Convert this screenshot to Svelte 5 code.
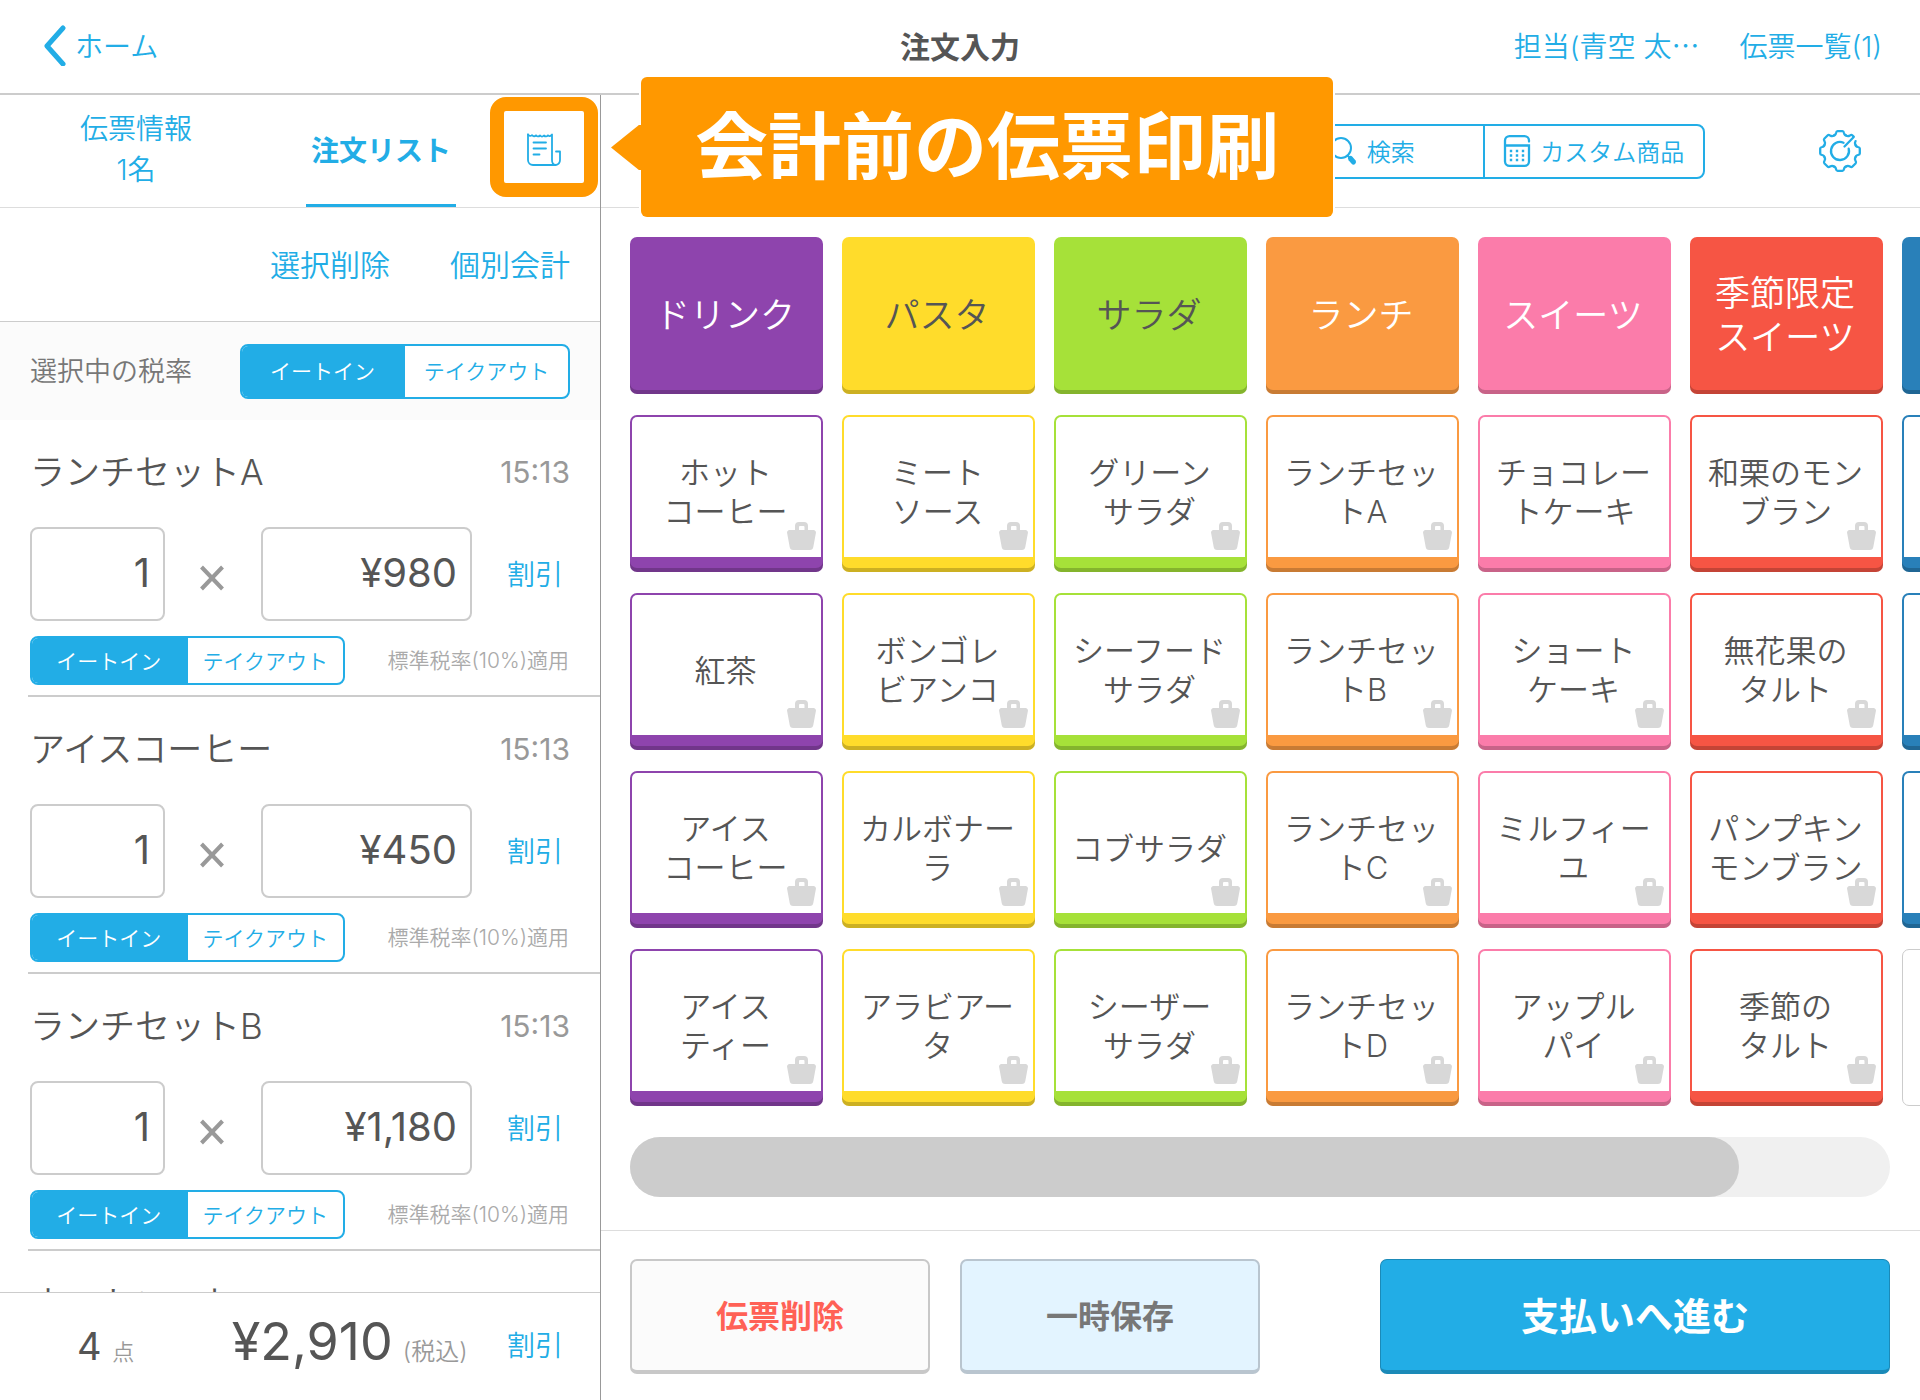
<script lang="ts">
  interface OrderItem {
    id: number;
    name: string;
    time: string;
    qty: string;
    price: string;
    tax: string;
  }

  interface Product {
    name: string;
    bag?: boolean;
    empty?: boolean;
  }

  interface Category {
    name: string;
    color: string;
    products: Product[];
  }

  const taxNote = '標準税率(10%)適用';

  let taxMode = $state('in');

  let items: OrderItem[] = $state([
    { id: 1, name: 'ランチセットA', time: '15:13', qty: '1', price: '¥980', tax: 'in' },
    { id: 2, name: 'アイスコーヒー', time: '15:13', qty: '1', price: '¥450', tax: 'in' },
    { id: 3, name: 'ランチセットB', time: '15:13', qty: '1', price: '¥1,180', tax: 'in' },
    { id: 4, name: 'ホットコーヒー', time: '15:13', qty: '1', price: '¥300', tax: 'in' },
  ]);

  const categories: Category[] = [
    {
      name: 'ドリンク',
      color: 'purple',
      products: [
        { name: 'ホット\nコーヒー', bag: true },
        { name: '紅茶', bag: true },
        { name: 'アイス\nコーヒー', bag: true },
        { name: 'アイス\nティー', bag: true },
      ],
    },
    {
      name: 'パスタ',
      color: 'yellow',
      products: [
        { name: 'ミート\nソース', bag: true },
        { name: 'ボンゴレ\nビアンコ', bag: true },
        { name: 'カルボナー\nラ', bag: true },
        { name: 'アラビアー\nタ', bag: true },
      ],
    },
    {
      name: 'サラダ',
      color: 'green',
      products: [
        { name: 'グリーン\nサラダ', bag: true },
        { name: 'シーフード\nサラダ', bag: true },
        { name: 'コブサラダ', bag: true },
        { name: 'シーザー\nサラダ', bag: true },
      ],
    },
    {
      name: 'ランチ',
      color: 'orange',
      products: [
        { name: 'ランチセッ\nトA', bag: true },
        { name: 'ランチセッ\nトB', bag: true },
        { name: 'ランチセッ\nトC', bag: true },
        { name: 'ランチセッ\nトD', bag: true },
      ],
    },
    {
      name: 'スイーツ',
      color: 'pink',
      products: [
        { name: 'チョコレー\nトケーキ' },
        { name: 'ショート\nケーキ', bag: true },
        { name: 'ミルフィー\nユ', bag: true },
        { name: 'アップル\nパイ', bag: true },
      ],
    },
    {
      name: '季節限定\nスイーツ',
      color: 'red',
      products: [
        { name: '和栗のモン\nブラン', bag: true },
        { name: '無花果の\nタルト', bag: true },
        { name: 'パンプキン\nモンブラン', bag: true },
        { name: '季節の\nタルト', bag: true },
      ],
    },
    {
      name: '',
      color: 'blue',
      products: [
        { name: '' },
        { name: '' },
        { name: 'イタリアン\nプリン' },
        { name: '', empty: true },
      ],
    },
  ];

  const gearTeeth = [0, 90, 135, 180, 225, 270, 315];
</script>

<div class="app">
  <header class="header">
    <a class="back" href="#home">
      <svg width="24" height="42" viewBox="0 0 24 42" fill="none" stroke="currentColor" stroke-width="5" stroke-linecap="round" stroke-linejoin="round">
        <polyline points="20 4 4 22 20 40" />
      </svg>
      <span>ホーム</span>
    </a>
    <h1 class="title">注文入力</h1>
    <nav class="header-links">
      <a href="#staff">担当(青空 太<span class="ellipsis">…</span></a>
      <a href="#slips">伝票一覧(1)</a>
    </nav>
  </header>

  <div class="body">
    <aside class="sidebar">
      <div class="tabs">
        <button class="tab">伝票情報<br />1名</button>
        <button class="tab active">注文リスト</button>
        <div class="print">
          <button class="print-btn" aria-label="会計前の伝票印刷">
            <svg width="36" height="36" viewBox="0 0 36 36" fill="none" stroke="currentColor" stroke-width="1.800" stroke-linecap="round" stroke-linejoin="round">
              <path d="M2 2.500v25.500a5 5 0 0 0 5 5h22.500" />
              <path d="M2 2.500q2 2.600 4 .6q2 2.200 4 .2q2 2.200 4 .2q2 2.200 4 0q2 2 4-.2q2 1.800 4-.8v25.500q0 4.600 3.500 5q4.500-.6 4.500-5v-8.500h-4" />
              <path d="M7.500 10.500h12.500M7.500 16.500h12.500M7.500 22.500h6" />
            </svg>
          </button>
          <div class="callout">会計前の伝票印刷</div>
        </div>
      </div>

      <div class="actions">
        <button class="link">選択削除</button>
        <button class="link">個別会計</button>
      </div>

      <div class="tax-bar">
        <span class="tax-label">選択中の税率</span>
        <div class="segment large">
          <label class:on={taxMode === 'in'}>
            <input type="radio" name="tax" value="in" bind:group={taxMode} />イートイン
          </label>
          <label class:on={taxMode === 'out'}>
            <input type="radio" name="tax" value="out" bind:group={taxMode} />テイクアウト
          </label>
        </div>
      </div>

      <ul class="items">
        {#each items as item (item.id)}
          <li class="item">
            <div class="item-head">
              <span class="item-name">{item.name}</span>
              <span class="item-time">{item.time}</span>
            </div>
            <div class="item-row">
              <input class="box qty" type="text" aria-label="数量" bind:value={item.qty} />
              <svg class="times" width="24" height="26" viewBox="0 0 24 26" stroke="currentColor" stroke-width="4">
                <path d="M1.500 2l21 22M22.500 2l-21 22" />
              </svg>
              <input class="box price" type="text" aria-label="単価" bind:value={item.price} />
              <button class="link discount">割引</button>
            </div>
            <div class="item-tax">
              <div class="segment">
                <label class:on={item.tax === 'in'}>
                  <input type="radio" name="tax-{item.id}" value="in" bind:group={item.tax} />イートイン
                </label>
                <label class:on={item.tax === 'out'}>
                  <input type="radio" name="tax-{item.id}" value="out" bind:group={item.tax} />テイクアウト
                </label>
              </div>
              <span class="tax-note">{taxNote}</span>
            </div>
          </li>
        {/each}
      </ul>

      <div class="total">
        <span class="count">4 <small>点</small></span>
        <span class="sum">¥2,910<small>(税込)</small></span>
        <button class="link discount">割引</button>
      </div>
    </aside>

    <main class="main">
      <div class="toolbar">
        <div class="tools">
          <button class="tool">
            <svg width="28" height="30" viewBox="0 0 28 30" fill="none" stroke="currentColor" stroke-linecap="round">
              <circle cx="11" cy="12" r="10" stroke-width="2" />
              <path d="M17.500 19.500l2.500 2.500" stroke-width="2" />
              <path d="M20.500 22.500l3 3.500" stroke-width="5" />
            </svg>
            <span>検索</span>
          </button>
          <button class="tool">
            <svg width="28" height="32" viewBox="0 0 28 32" fill="none" stroke="currentColor" stroke-width="2.300" stroke-linecap="round">
              <path d="M26 6.500v-1a4.500 4.500 0 0 0-4.500-4.300h-15a4.500 4.500 0 0 0-4.500 4.300v21a4.500 4.500 0 0 0 4.500 4.300h15a4.500 4.500 0 0 0 4.500-4.300v-16h-24" />
              <path d="M8 16h.01M14 16h.01M20 16h.01M8 20.500h.01M14 20.500h.01M20 20.500h.01M8 25h.01M14 25h.01M20 25h.01" stroke-width="2.400" stroke-linecap="square" />
            </svg>
            <span>カスタム商品</span>
          </button>
        </div>
        <button class="settings" aria-label="設定">
          <svg width="44" height="44" viewBox="-22 -22 44 44" fill="none" stroke="currentColor" stroke-width="2.300" stroke-linecap="round" stroke-linejoin="round">
            {#each gearTeeth as angle}
              <path transform="rotate({angle})" d="M-6.400-15.400Q-4.600-15.600-4-18Q-3.600-19.800-2.500-19.800H2.500Q3.600-19.800 4-18Q4.600-15.600 6.400-15.400" />
            {/each}
            <path transform="rotate(45)" d="M-6.400-15.400Q-4.600-15.600-4-18Q-3.600-19.800-2.500-19.800H-.5M4-18Q4.600-15.600 6.400-15.400" />
            <path d="M13.500-13.800L4.500-4.500M3.500-8.300A9 9 0 1 0 8.700-2.300" />
          </svg>
        </button>
      </div>

      <div class="catalog">
        <div class="columns">
          {#each categories as category}
            <div class="column {category.color}">
              <button class="tile category">{category.name}</button>
              {#each category.products as product}
                <button class="tile product" class:empty={product.empty}>
                  <span class="face">{product.name}</span>
                  {#if product.bag}
                    <svg class="bag" width="29" height="28" viewBox="0 0 29 28" fill="currentColor">
                      <path d="M8 8V4a4 4 0 0 1 4-4h5a4 4 0 0 1 4 4v4h5.500a2.500 2.500 0 0 1 2.400 3l-2.600 14a3.500 3.500 0 0 1-3.500 3H6.200a3.500 3.500 0 0 1-3.500-3L.1 11A2.500 2.500 0 0 1 2.500 8zM12 8h5.500V5a1 1 0 0 0-1-1h-3.500a1 1 0 0 0-1 1z" fill-rule="evenodd" />
                    </svg>
                  {/if}
                </button>
              {/each}
            </div>
          {/each}
        </div>
        <div class="scrollbar"><div class="thumb"></div></div>
      </div>

      <footer class="footer">
        <button class="btn delete">伝票削除</button>
        <button class="btn save">一時保存</button>
        <button class="btn pay">支払いへ進む</button>
      </footer>
    </main>
  </div>
</div>

<style>
  :global(body) {
    margin: 0;
    background: #ffffff;
  }

  .app {
    --blue: #22ade6;
    display: flex;
    flex-direction: column;
    height: 100vh;
    overflow: hidden;
    color: #555555;
    font-family: Inter, 'Noto Sans CJK JP', sans-serif;
    font-weight: 350;
  }

  .app * {
    box-sizing: border-box;
  }

  button,
  input {
    margin: 0;
    padding: 0;
    border: 0;
    background: none;
    color: inherit;
    font: inherit;
  }

  button,
  label {
    cursor: pointer;
  }

  a {
    color: var(--blue);
    text-decoration: none;
  }

  svg {
    flex-shrink: 0;
  }

  /* header */
  .header {
    display: grid;
    grid-template-columns: 1fr auto 1fr;
    align-items: center;
    flex-shrink: 0;
    height: 95px;
    padding: 0 38px 4px;
    border-bottom: 2px solid #cccccc;
    font-size: 28px;
  }

  .back {
    display: flex;
    align-items: center;
    gap: 8px;
    padding-left: 5px;
  }

  .title {
    margin: 0;
    font-size: 30px;
    font-weight: 600;
  }

  .header-links {
    display: flex;
    justify-content: flex-end;
    gap: 40px;
  }

  .ellipsis {
    font-family: 'Noto Sans CJK JP', sans-serif;
  }

  .body {
    display: flex;
    flex: 1;
    min-height: 0;
  }

  /* order list */
  .sidebar {
    display: flex;
    flex-direction: column;
    flex: 0 0 601px;
    border-right: 1px solid #999999;
  }

  .tabs {
    display: grid;
    grid-template-columns: 1fr 150px 108px;
    gap: 34px;
    flex-shrink: 0;
    height: 113px;
    padding-right: 2px;
    border-bottom: 1px solid #dddddd;
  }

  .tab {
    color: var(--blue);
    font-size: 28px;
    line-height: 41px;
    padding-bottom: 3px;
  }

  .tab.active {
    padding: 3px 0 0;
    border-bottom: 3px solid var(--blue);
    font-weight: 600;
  }

  .print {
    position: relative;
    height: 100px;
    margin-top: 2px;
  }

  .print-btn {
    display: flex;
    align-items: center;
    justify-content: center;
    width: 108px;
    height: 100px;
    padding-top: 6px;
    border: 14px solid #ff9800;
    border-radius: 16px;
    color: var(--blue);
  }

  .callout {
    position: absolute;
    z-index: 2;
    top: -20px;
    left: calc(100% + 43px);
    width: 692px;
    height: 140px;
    border-radius: 6px;
    background: #ff9800;
    box-shadow: 0 0 0 2px #ffffff;
    color: #ffffff;
    font-size: 73px;
    font-weight: 700;
    line-height: 140px;
    text-align: center;
    white-space: nowrap;
  }

  .callout::before {
    content: '';
    position: absolute;
    top: 48px;
    left: -30px;
    width: 31px;
    height: 45px;
    background: #ff9800;
    clip-path: polygon(0 50%, 90% 0, 100% 0, 100% 100%, 90% 100%);
  }

  .link {
    color: var(--blue);
    font-size: 30px;
  }

  .link.discount {
    font-size: 28px;
  }

  .actions {
    display: flex;
    align-items: center;
    justify-content: flex-end;
    gap: 60px;
    flex-shrink: 0;
    height: 114px;
    padding: 0 30px 4px 0;
    border-bottom: 1px solid #cccccc;
  }

  .tax-bar {
    display: flex;
    align-items: center;
    justify-content: space-between;
    flex-shrink: 0;
    height: 98px;
    padding: 0 30px;
    background: #fbfbfb;
  }

  .tax-label {
    padding-bottom: 3px;
    color: #777777;
    font-size: 27px;
  }

  .segment {
    position: relative;
    display: grid;
    grid-template-columns: 1fr 1fr;
    width: 315px;
    height: 49px;
    overflow: hidden;
    border: 2px solid var(--blue);
    border-radius: 8px;
    background: #ffffff;
    color: var(--blue);
    font-size: 21px;
  }

  .segment.large {
    width: 330px;
    height: 55px;
  }

  .segment label {
    display: flex;
    align-items: center;
    justify-content: center;
    padding-bottom: 2px;
  }

  .segment label.on {
    padding-right: 2px;
    background: var(--blue);
    color: #ffffff;
  }

  .segment input {
    position: absolute;
    opacity: 0;
    pointer-events: none;
  }

  .items {
    flex: 1;
    min-height: 0;
    margin: 0;
    padding: 0 0 0 28px;
    overflow: hidden;
    list-style: none;
  }

  .item {
    padding: 28px 0 10px 2px;
    border-bottom: 2px solid #cccccc;
  }

  .item-head {
    display: flex;
    justify-content: space-between;
    margin-bottom: 31px;
    padding-right: 30px;
    line-height: 48px;
  }

  .item-name {
    font-size: 35px;
  }

  .item-time {
    color: #999999;
    font-size: 30px;
    font-weight: 400;
  }

  .item-row {
    display: flex;
    align-items: center;
    margin-bottom: 15px;
    padding-right: 37px;
  }

  .box {
    height: 94px;
    padding: 0 13px 3px;
    border: 2px solid #cccccc;
    border-radius: 8px;
    font-size: 40px;
    font-weight: 400;
    text-align: right;
  }

  .qty {
    width: 135px;
  }

  .price {
    width: 211px;
  }

  .times {
    margin: 8px 37px 0 35px;
    color: #999999;
  }

  .item-row .discount {
    margin-left: auto;
    padding-bottom: 2px;
  }

  .item-tax {
    display: flex;
    align-items: center;
    justify-content: space-between;
    padding-right: 31px;
  }

  .tax-note {
    padding-bottom: 3px;
    color: #aaaaaa;
    font-size: 21px;
  }

  .total {
    display: flex;
    align-items: baseline;
    justify-content: space-between;
    flex-shrink: 0;
    height: 108px;
    padding: 17px 37px 0 77px;
    border-top: 1px solid #cccccc;
    line-height: 64px;
  }

  .total small {
    color: #999999;
    font-size: 24px;
    font-weight: 350;
  }

  .total .discount {
    align-self: flex-start;
    line-height: 72px;
  }

  .count {
    font-size: 38px;
    font-weight: 400;
  }

  .total .count small {
    font-size: 22px;
  }

  .sum {
    margin-left: 58px;
    font-size: 52px;
    font-weight: 400;
  }

  .sum small {
    margin-left: 10px;
  }

  /* catalog */
  .main {
    display: flex;
    flex-direction: column;
    flex: 1;
    min-width: 0;
  }

  .toolbar {
    display: flex;
    align-items: center;
    justify-content: flex-end;
    gap: 113px;
    flex-shrink: 0;
    height: 113px;
    padding-right: 58px;
    border-bottom: 1px solid #dddddd;
    color: var(--blue);
  }

  .tools {
    display: grid;
    grid-template-columns: 1fr 1fr;
    width: 445px;
    height: 55px;
    border: 2px solid var(--blue);
    border-radius: 8px;
    font-size: 24px;
  }

  .tool {
    display: flex;
    align-items: center;
    justify-content: center;
    gap: 9px;
  }

  .tool span {
    padding-bottom: 2px;
  }

  .tool + .tool {
    border-left: 2px solid var(--blue);
  }

  .settings {
    display: flex;
  }

  .catalog {
    flex: 1;
    min-height: 0;
    padding: 29px 0 0 29px;
  }

  .columns {
    display: flex;
    gap: 19px;
    margin-bottom: 31px;
    overflow: hidden;
  }

  .column {
    display: grid;
    gap: 21px;
    flex: 0 0 193px;
  }

  .purple {
    --color: #8e44ad;
  }

  .yellow {
    --color: #ffdc2b;
  }

  .green {
    --color: #a6e139;
  }

  .orange {
    --color: #fa9a41;
  }

  .pink {
    --color: #fb7caa;
  }

  .red {
    --color: #f65544;
  }

  .blue {
    --color: #2980b9;
  }

  .tile {
    position: relative;
    height: 157px;
    border-radius: 7px;
    background: var(--color);
    box-shadow: inset 0 -4px 0 rgba(0, 0, 0, 0.2);
    white-space: pre-line;
  }

  .category {
    padding: 0 3px 1px 0;
    color: #ffffff;
    font-size: 35px;
    line-height: 44px;
  }

  .yellow .category,
  .green .category {
    color: #555555;
  }

  .product {
    padding: 2px 2px 15px;
    font-size: 31px;
    line-height: 39px;
  }

  .face {
    display: flex;
    align-items: center;
    justify-content: center;
    height: 100%;
    padding: 10px 2px 0 0;
    border-radius: 5px 5px 0 0;
    background: #ffffff;
    text-align: center;
  }

  .product.empty {
    border: 1px solid #cccccc;
    background: #ffffff;
    box-shadow: none;
  }

  .bag {
    position: absolute;
    right: 7px;
    bottom: 22px;
    color: #d8d8d8;
  }

  .scrollbar {
    height: 60px;
    margin-right: 30px;
    border-radius: 30px;
    background: #f0f0f0;
  }

  .thumb {
    width: 88%;
    height: 100%;
    border-radius: 30px;
    background: #cccccc;
  }

  .footer {
    display: flex;
    gap: 30px;
    flex-shrink: 0;
    padding: 28px 30px 26px 29px;
    border-top: 1px solid #dddddd;
  }

  .btn {
    width: 300px;
    height: 115px;
    padding-bottom: 3px;
    border: 2px solid #c8c8c8;
    border-bottom-width: 4px;
    border-radius: 7px;
    font-size: 32px;
    font-weight: 600;
  }

  .delete {
    background: #fbfbfb;
    color: #ff6156;
  }

  .save {
    border-color: #b9c5cf;
    background: #e3f4ff;
    color: #777777;
  }

  .pay {
    width: 510px;
    margin-left: auto;
    border-color: #1b8ab8;
    border-width: 1px 1px 4px;
    background: var(--blue);
    color: #ffffff;
    font-size: 38px;
  }
</style>
